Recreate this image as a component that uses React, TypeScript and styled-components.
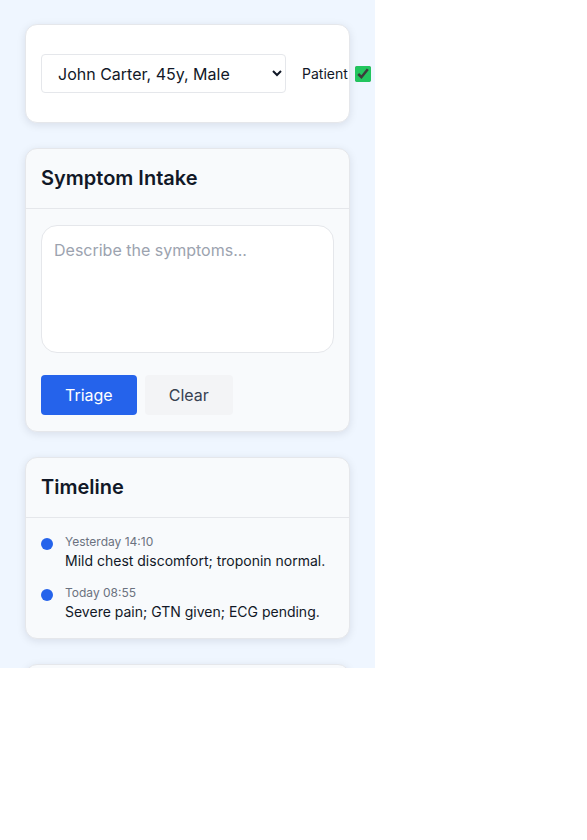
import React from "react";
import styled, { createGlobalStyle } from "styled-components";

const Global = createGlobalStyle`
  html, body { margin: 0; padding: 0; background: #ffffff; }
  body { font-family: Inter, "Noto Sans", "Liberation Sans", sans-serif; color: #111827; }
  * { box-sizing: border-box; }
`;

const Page = styled.div`
  width: 375px;
  height: 668px;
  overflow: hidden;
  background: #eff6ff;
  padding: 24px 25px 0;
  display: flex;
  flex-direction: column;
  gap: 25px;
`;

const Card = styled.section<{ $tone?: "white" | "muted" }>`
  flex: none;
  background: ${(p) => (p.$tone === "white" ? "#ffffff" : "#f8fafc")};
  border: 1px solid #e5e7eb;
  border-radius: 12px;
  box-shadow: 0 2px 8px rgba(15, 23, 42, 0.1);
`;

const PatientRow = styled.div`
  display: flex;
  align-items: center;
  padding: 29px 15px 29px;
  white-space: nowrap;
`;

const PatientSelect = styled.select`
  width: 245px;
  height: 39px;
  flex: none;
  padding: 0 8px 0 12px;
  font-family: inherit;
  font-size: 16px;
  color: #111827;
  background: #ffffff;
  border: 1px solid #e5e7eb;
  border-radius: 4px;
`;

const CheckLabel = styled.label`
  display: flex;
  align-items: center;
  gap: 7px;
  margin-left: 16px;
  font-size: 14px;
  color: #111827;
  flex: none;
`;

const Check = styled.input`
  width: 16px;
  height: 16px;
  margin: 0;
  accent-color: #22c55e;
`;

const CardHeader = styled.header`
  padding: 16px 15px;
  border-bottom: 1px solid #e5e7eb;
`;

const Title = styled.h2`
  margin: 0;
  font-size: 20px;
  line-height: 27px;
  font-weight: 600;
  color: #111827;
`;

const CardBody = styled.div`
  padding: 16px 15px;
  display: flex;
  flex-direction: column;
`;

const Symptoms = styled.textarea`
  display: block;
  width: 100%;
  height: 128px;
  resize: none;
  padding: 12px 12px;
  font-family: inherit;
  font-size: 16px;
  line-height: 24px;
  color: #111827;
  background: #ffffff;
  border: 1px solid #e5e7eb;
  border-radius: 16px;
  outline: none;
  &::placeholder { color: #9ca3af; }
`;

const Actions = styled.div`
  display: flex;
  gap: 8px;
  margin-top: 22px;
`;

const Button = styled.button<{ $variant?: "primary" | "secondary" }>`
  height: 40px;
  padding: 0 24px;
  font-family: inherit;
  font-size: 16px;
  border: none;
  border-radius: 4px;
  background: ${(p) => (p.$variant === "primary" ? "#2563eb" : "#f3f4f6")};
  color: ${(p) => (p.$variant === "primary" ? "#ffffff" : "#374151")};
  cursor: pointer;
`;

const TimelineList = styled.ul`
  list-style: none;
  margin: 0;
  padding: 0;
  display: flex;
  flex-direction: column;
  gap: 14px;
`;

const Event = styled.li`
  display: flex;
  align-items: flex-start;
  gap: 12px;
`;

const Dot = styled.span`
  flex: none;
  width: 12px;
  height: 12px;
  margin-top: 4px;
  border-radius: 50%;
  background: #2563eb;
`;

const EventText = styled.div`
  display: flex;
  flex-direction: column;
`;

const When = styled.span`
  font-size: 12px;
  line-height: 16px;
  color: #6b7280;
`;

const What = styled.span`
  font-size: 14px;
  line-height: 21px;
  color: #111827;
`;

const events = [
  { when: "Yesterday 14:10", what: "Mild chest discomfort; troponin normal." },
  { when: "Today 08:55", what: "Severe pain; GTN given; ECG pending." },
];

export default function App() {
  return (
    <>
      <Global />
      <Page>
        <Card $tone="white">
          <PatientRow>
            <PatientSelect defaultValue="jc">
              <option value="jc">John Carter, 45y, Male</option>
              <option value="em">Emma Moore, 32y, Female</option>
            </PatientSelect>
            <CheckLabel>
              Patient
              <Check type="checkbox" defaultChecked />
            </CheckLabel>
          </PatientRow>
        </Card>

        <Card>
          <CardHeader>
            <Title>Symptom Intake</Title>
          </CardHeader>
          <CardBody>
            <Symptoms placeholder="Describe the symptoms..." />
            <Actions>
              <Button $variant="primary">Triage</Button>
              <Button $variant="secondary">Clear</Button>
            </Actions>
          </CardBody>
        </Card>

        <Card>
          <CardHeader>
            <Title>Timeline</Title>
          </CardHeader>
          <CardBody>
            <TimelineList>
              {events.map((e) => (
                <Event key={e.when}>
                  <Dot />
                  <EventText>
                    <When>{e.when}</When>
                    <What>{e.what}</What>
                  </EventText>
                </Event>
              ))}
            </TimelineList>
          </CardBody>
        </Card>

        <Card>
          <CardHeader>
            <Title>Triage Result</Title>
          </CardHeader>
          <CardBody>
            <What>No triage yet.</What>
          </CardBody>
        </Card>
      </Page>
    </>
  );
}
